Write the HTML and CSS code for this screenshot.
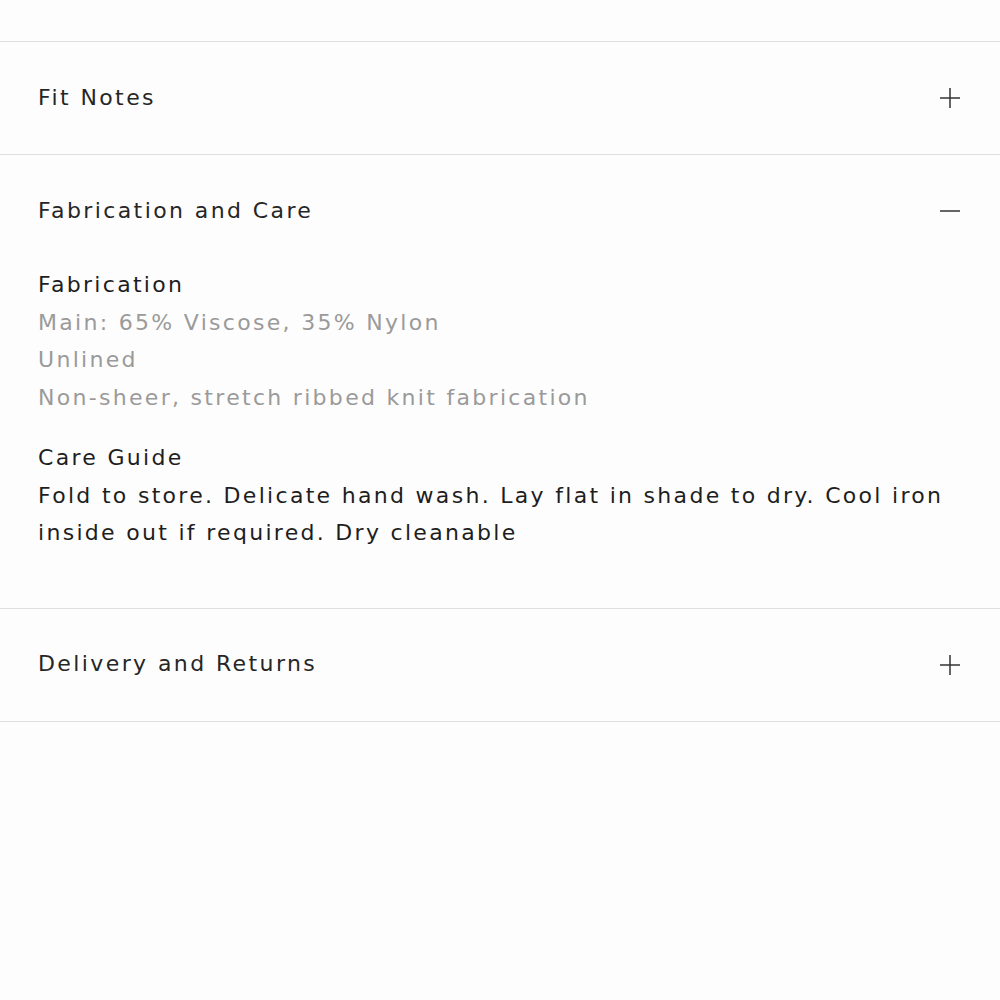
FILE: index.html
```html
<!DOCTYPE html>
<html>
	<head>
		<meta charset="utf-8" />
		<title>Product details</title>
		<link rel="stylesheet" href="styles.css">
	</head>
	<body>
	<section class="accordion">
		<div class="item">
			<div class="head">
				<span class="title">Fit Notes</span>
				<svg class="icon" width="20" height="20" viewBox="0 0 20 20"><path d="M0 10H20M10 0V20" /></svg>
			</div>
		</div>
		<div class="item open">
			<div class="head">
				<span class="title">Fabrication and Care</span>
				<svg class="icon" width="20" height="20" viewBox="0 0 20 20"><path d="M0 10H20" /></svg>
			</div>
			<div class="body">
				<div class="group">
					<p class="label">Fabrication</p>
					<p class="muted">Main: 65% Viscose, 35% Nylon</p>
					<p class="muted">Unlined</p>
					<p class="muted">Non-sheer, stretch ribbed knit fabrication</p>
				</div>
				<div class="group">
					<p class="label">Care Guide</p>
					<p>Fold to store. Delicate hand wash. Lay flat in shade to dry. Cool iron inside out if required. Dry cleanable</p>
				</div>
			</div>
		</div>
		<div class="item">
			<div class="head">
				<span class="title">Delivery and Returns</span>
				<svg class="icon" width="20" height="20" viewBox="0 0 20 20"><path d="M0 10H20M10 0V20" /></svg>
			</div>
		</div>
	</section>
	</body>
</html>
```
FILE: styles.css
```css
body{
	margin: 0;
	background-color: #fdfdfd;
	font-family: "DejaVu Sans", "Open Sans", sans-serif;
	color: #1e1e1e;
}
.accordion{
	padding-top: 41px;
}
.item{
	border-top: 1px solid #dedede;
}
.item:last-child{
	border-bottom: 1px solid #dedede;
}
.head{
	height: 112px;
	padding: 0 40px 0 38px;
	display: flex;
	align-items: center;
	justify-content: space-between;
}
.title{
	font-size: 22px;
	letter-spacing: 2.4px;
	color: #262626;
	margin-top: -2px;
}
.icon{
	stroke: #333;
	stroke-width: 1.5;
	fill: none;
}
.body{
	padding: 0 38px 56px 38px;
	font-size: 22px;
	letter-spacing: 2.3px;
	line-height: 37.5px;
	margin-top: -1px;
}
.body p{
	margin: 0;
}
.group + .group{
	margin-top: 23px;
}
.muted{
	color: #9a9a9a;
}
```
